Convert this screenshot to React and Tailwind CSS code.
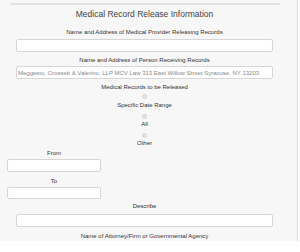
import React from "react";

const Label = ({ children, className = "" }) => (
  <p className={`text-[6px] leading-[8px] text-[#333] text-center ${className}`}>
    {children}
  </p>
);

const Radio = ({ className = "" }) => (
  <span
    className={`block w-[5px] h-[5px] rounded-full border border-[#d4d4d4] bg-[#e4e4e4] ${className}`}
  ></span>
);

const App = () => {
  return (
    <div
      className="w-[300px] h-[252px] bg-white"
      style={{ fontFamily: '"Liberation Sans", Arial, sans-serif' }}
    >
      <div className="w-[298px] h-[241px] bg-[#f7f7f7] border-r border-[#dedede] pt-[3px]">
        <div className="w-[289px] flex flex-col items-center">
          <div className="ml-[10px] self-start w-[270px] h-[2px] bg-[#e3e3e3]"></div>

          <h2 className="mt-[3px] text-[8.5px] leading-[12px] text-[#444]">
            Medical Record Release Information
          </h2>

          <Label className="mt-[8px]">
            Name and Address of Medical Provider Releasing Records
          </Label>
          <input
            readOnly
            className="mt-[3px] w-[257px] h-[13px] bg-white border border-[#d6d6d6] rounded-[2px] outline-none"
          />

          <Label className="mt-[4px]">
            Name and Address of Person Receiving Records
          </Label>
          <input
            readOnly
            defaultValue="Meggesto, Crossett & Valerino, LLP MCV Law 313 East Willow Street Syracuse, NY 13203"
            className="mt-[2px] w-[257px] h-[13px] bg-white border border-[#d6d6d6] rounded-[2px] outline-none px-[1px] text-[6px] text-[#888]"
          />

          <Label className="mt-[4px]">Medical Records to be Released</Label>

          <Radio className="mt-[3px]" />
          <Label className="mt-[2px]">Specific Date Range</Label>
          <Radio className="mt-[5px]" />
          <Label className="mt-[1px]">All</Label>
          <Radio className="mt-[5px]" />
          <Label className="mt-[1px]">Other</Label>

          {/* From / To */}
          <div className="self-start ml-[7px] w-[94px] flex flex-col">
            <Label className="mt-[2px]">From</Label>
            <input
              readOnly
              className="mt-[2px] w-[94px] h-[13px] bg-white border border-[#d6d6d6] rounded-[2px] outline-none"
            />
            <Label className="mt-[5px]">To</Label>
            <input
              readOnly
              className="mt-[2px] w-[94px] h-[12px] bg-white border border-[#d6d6d6] rounded-[2px] outline-none"
            />
          </div>

          <Label className="mt-[3px]">Describe</Label>
          <input
            readOnly
            className="mt-[4px] w-[257px] h-[13px] bg-white border border-[#d6d6d6] rounded-[2px] outline-none"
          />

          <Label className="mt-[5px]">
            Name of Attorney/Firm or Governmental Agency
          </Label>
        </div>
      </div>
    </div>
  );
};

export default App;
